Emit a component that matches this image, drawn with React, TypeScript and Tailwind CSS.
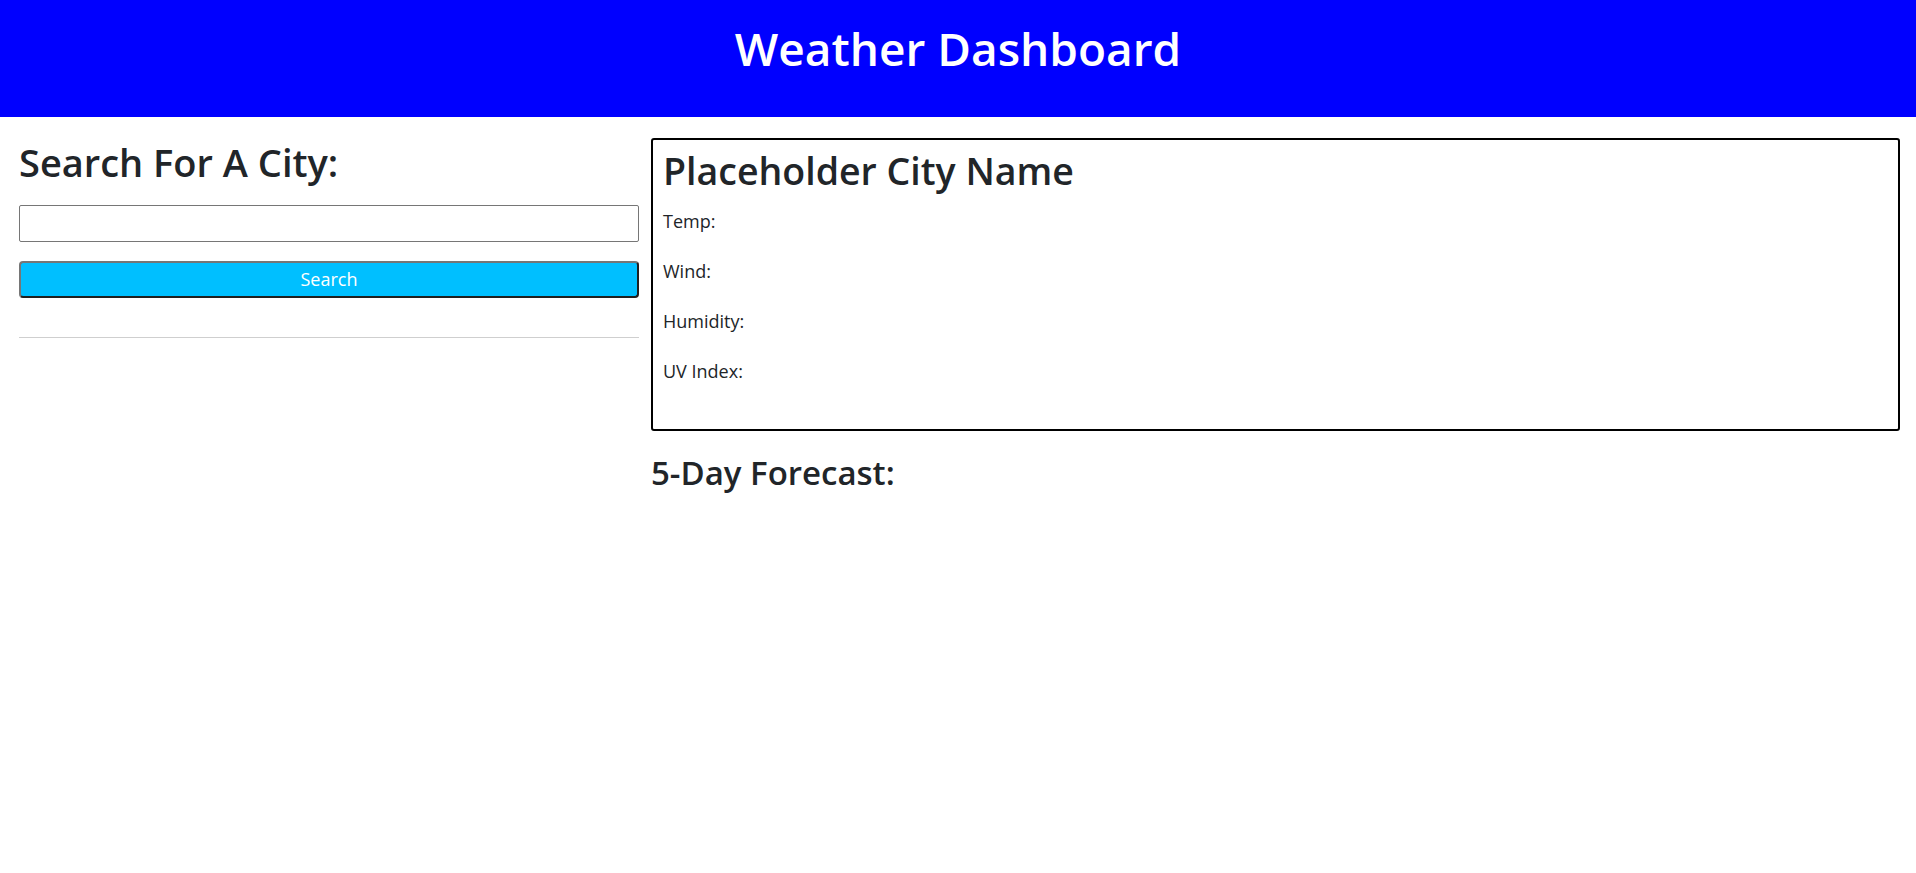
import * as React from "react"

/**
 * Weather Dashboard
 *
 * Search column on the left, current weather card and forecast on the right.
 */

const STATS = ["Temp:", "Wind:", "Humidity:", "UV Index:"]

function CurrentWeather() {
  return (
    <div className="rounded-[3px] border-2 border-black px-[10px] pt-[8px] pb-[23px]">
      <h2 className="mb-[12px] text-[37.5px] font-semibold leading-[45.6px] text-[#212529]">
        Placeholder City Name
      </h2>
      {STATS.map((label) => (
        <p key={label} className="mb-[20px] text-[18px] leading-[30px] text-[#212529]">
          {label}
        </p>
      ))}
    </div>
  )
}

export default function App() {
  const [city, setCity] = React.useState("")

  return (
    <div className="min-h-screen bg-white font-['Open_Sans',sans-serif] text-[#212529]">
      {/* Header */}
      <header className="flex h-[117px] justify-center bg-[#0000ff] pt-[21px]">
        <h1 className="text-[46px] font-semibold leading-[1.2] text-white">Weather Dashboard</h1>
      </header>

      <div className="flex gap-[12px] pt-[21px] pr-[16px] pl-[19px]">
        {/* Search column */}
        <aside className="w-[620px] shrink-0">
          <h2 className="mt-[2px] mb-[19px] text-[38px] font-semibold leading-[1.2]">Search For A City:</h2>
          <input
            type="text"
            value={city}
            onChange={(e) => setCity(e.target.value)}
            className="block h-[37px] w-full rounded-[2px] border border-[#767676] px-2 text-[18px] outline-none"
          />
          <button
            type="button"
            className="mt-[19px] block h-[37px] w-full rounded-[4px] border-2 border-t-[#767676] border-l-[#767676] border-r-[#1f1f1f] border-b-[#1f1f1f] bg-[#00bfff] text-[18px] leading-none text-white"
          >
            Search
          </button>
          <hr className="mt-[39px] border-t border-[#cfcfcf]" />
        </aside>

        {/* Weather column */}
        <main className="flex-1">
          <CurrentWeather />
          <h3 className="mt-[22px] text-[33px] font-semibold leading-[1.2]">5-Day Forecast:</h3>
        </main>
      </div>
    </div>
  )
}
